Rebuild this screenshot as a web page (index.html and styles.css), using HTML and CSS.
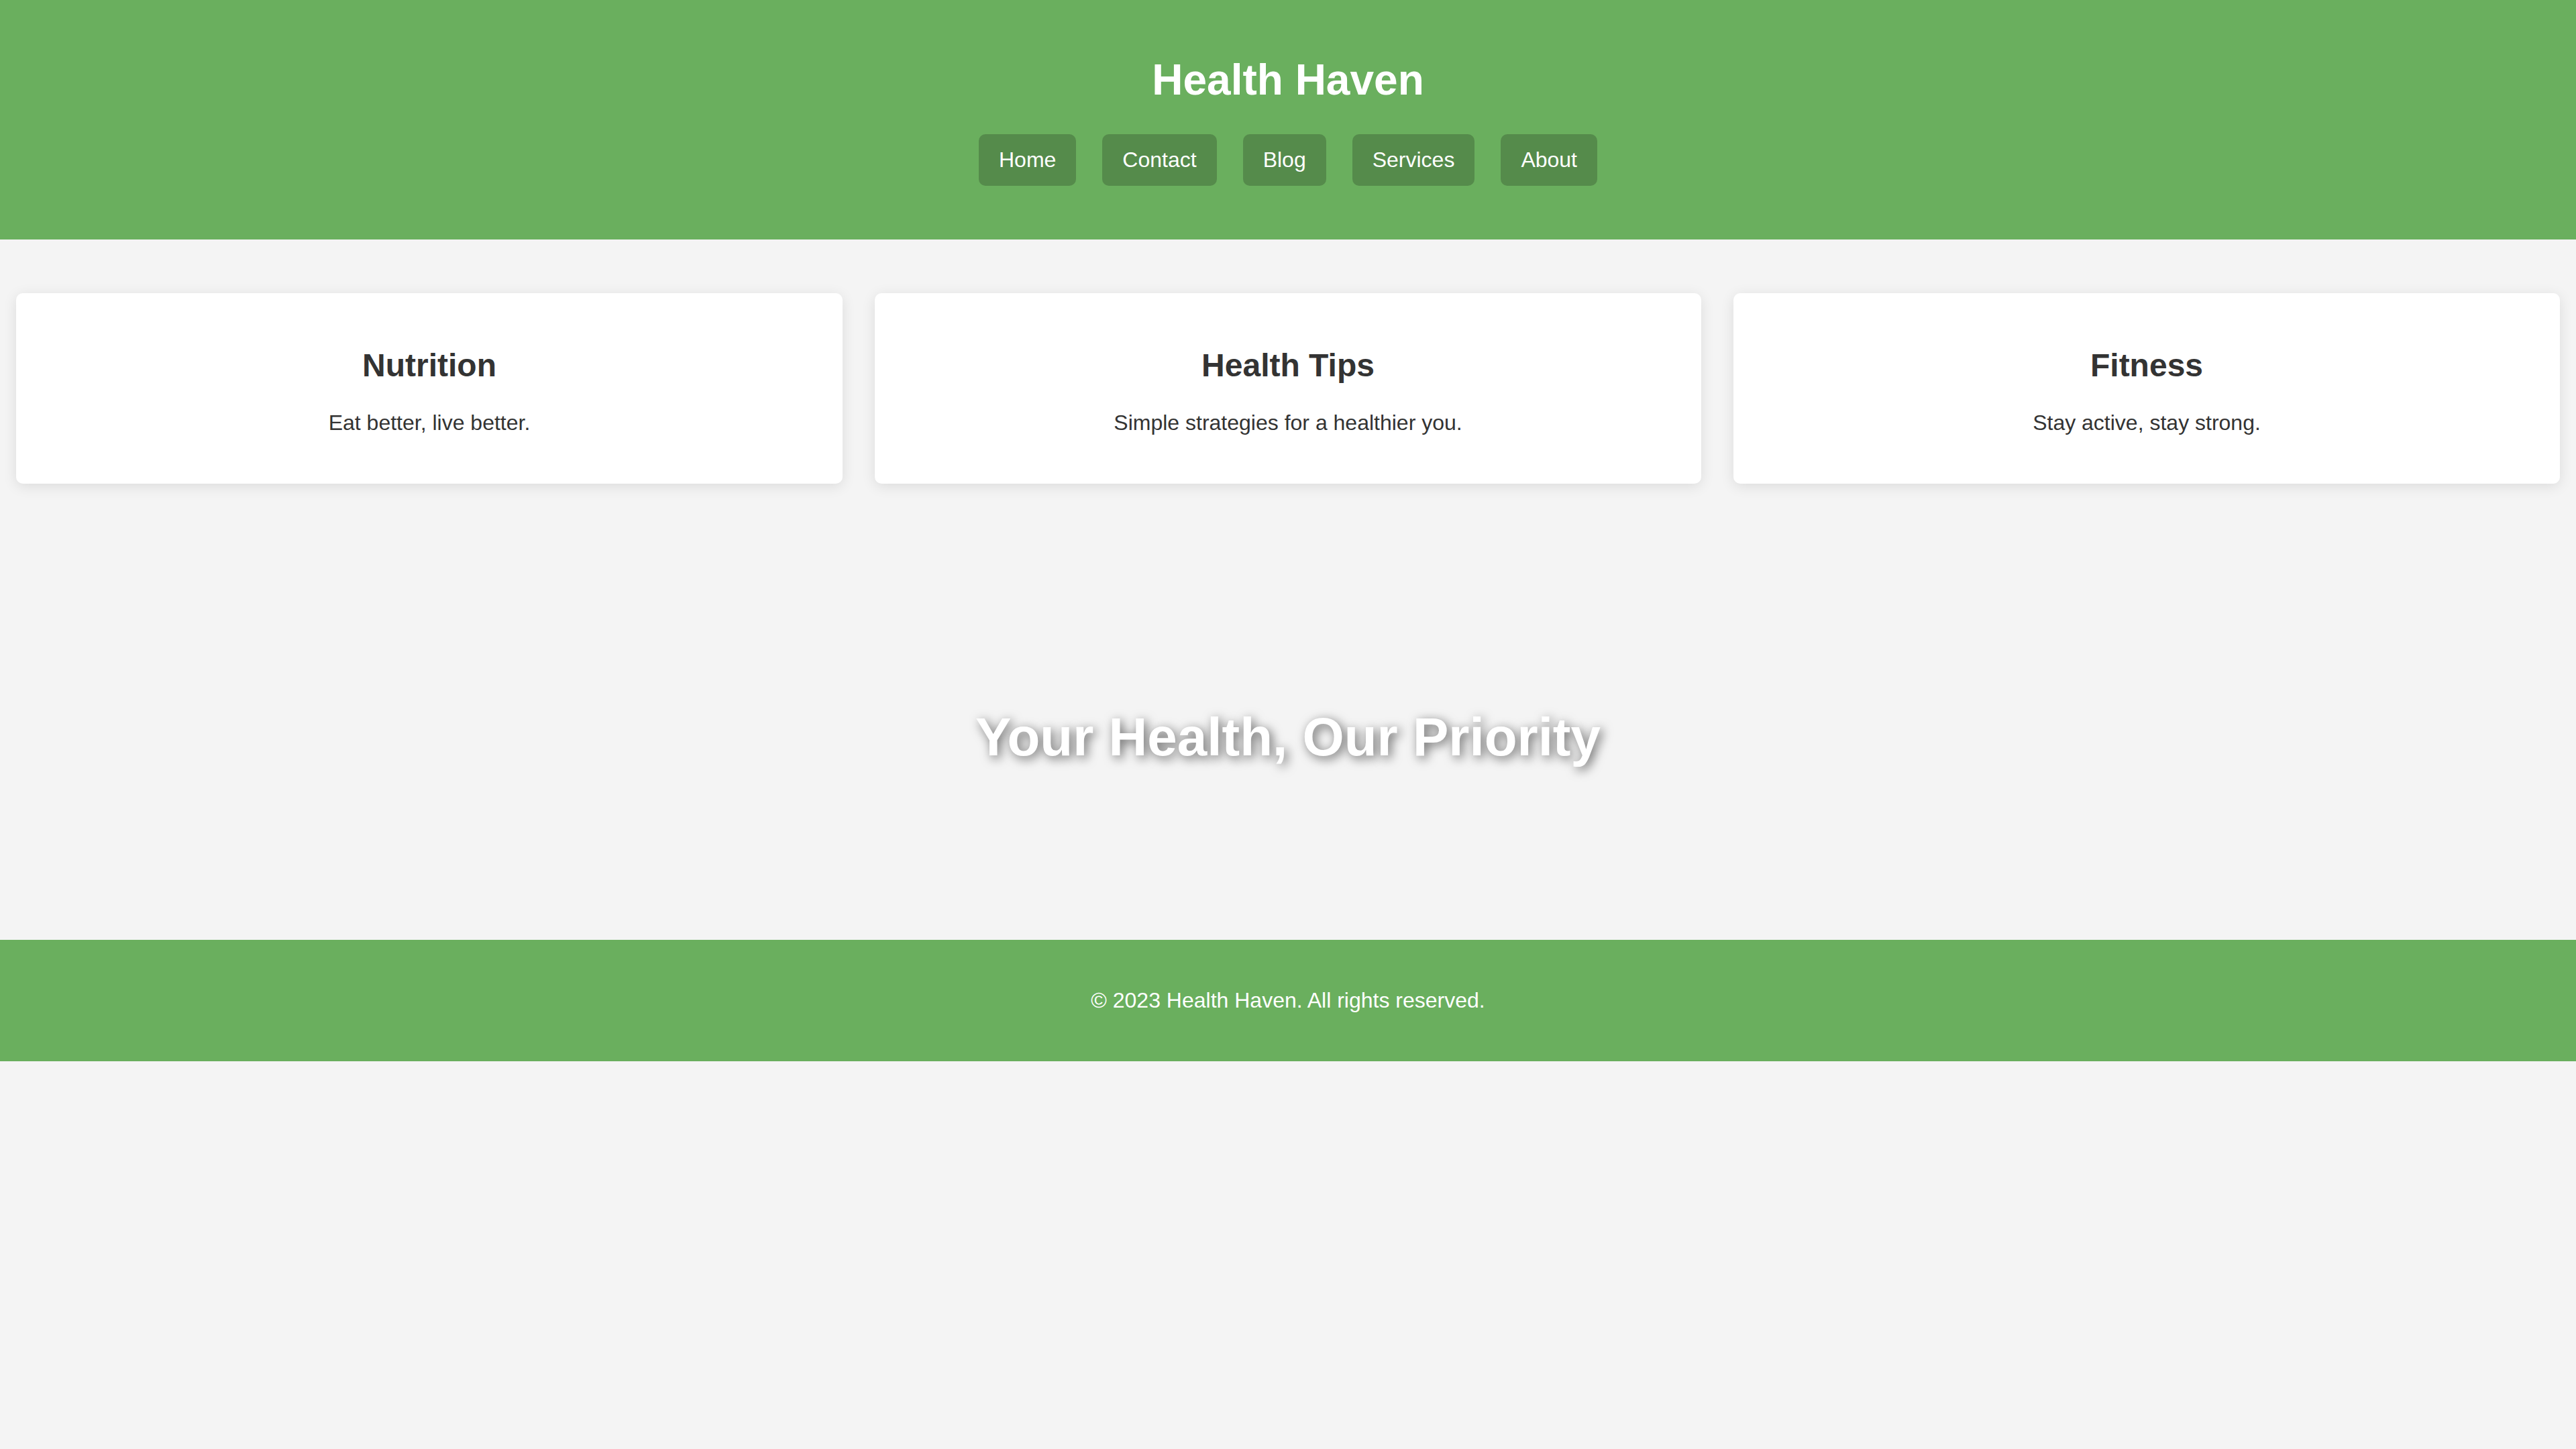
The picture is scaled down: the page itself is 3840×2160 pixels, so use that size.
FILE: index.html
```html
<!DOCTYPE html>
<html lang="en">
<head>
<meta charset="UTF-8">
<title>Health Haven</title>
<link rel="stylesheet" href="styles.css">
</head>
<body>
<header class="site-header">
  <h1 class="site-title">Health Haven</h1>
  <nav class="main-nav">
    <a class="nav-link" href="#">Home</a>
    <a class="nav-link" href="#">Contact</a>
    <a class="nav-link" href="#">Blog</a>
    <a class="nav-link" href="#">Services</a>
    <a class="nav-link" href="#">About</a>
  </nav>
</header>
<main>
  <section class="cards">
    <div class="card">
      <h2 class="card-title">Nutrition</h2>
      <p class="card-text">Eat better, live better.</p>
    </div>
    <div class="card">
      <h2 class="card-title">Health Tips</h2>
      <p class="card-text">Simple strategies for a healthier you.</p>
    </div>
    <div class="card">
      <h2 class="card-title">Fitness</h2>
      <p class="card-text">Stay active, stay strong.</p>
    </div>
  </section>
  <section class="hero">
    <h2 class="hero-title">Your Health, Our Priority</h2>
  </section>
</main>
<footer class="site-footer">
  <p class="footer-text">&copy; 2023 Health Haven. All rights reserved.</p>
</footer>
</body>
</html>
```

FILE: styles.css
```css
html, body {
  margin: 0;
  padding: 0;
}
body {
  background: #f4f4f4;
  color: #333;
  font-family: "Liberation Sans", Arial, sans-serif;
  font-size: 32px;
}
.site-header {
  background: #6aaf5e;
  color: #fff;
  text-align: center;
  padding: 40px 0 80px;
}
.site-title {
  font-size: 64px;
  font-weight: bold;
  margin: 42px 0 44px;
}
.main-nav {
  display: flex;
  justify-content: center;
  gap: 39px;
}
.nav-link {
  display: block;
  background: #558b4b;
  color: #fff;
  text-decoration: none;
  padding: 20px 30px;
  border-radius: 10px;
  font-size: 32px;
}
.cards {
  display: flex;
  justify-content: space-around;
  padding: 80px 0 0;
}
.card {
  width: 1152px;
  padding: 40px;
  background: #fff;
  border-radius: 10px;
  box-shadow: 0 4px 20px rgba(0, 0, 0, 0.1);
  text-align: center;
}
.card-title {
  font-size: 48px;
  margin: 40px 0;
  color: #333;
}
.card-text {
  margin: 32px 0;
  font-size: 32px;
  color: #333;
}
.hero {
  text-align: center;
  padding: 332px 0 256px;
}
.hero-title {
  margin: 0;
  font-size: 80px;
  font-weight: bold;
  color: #fff;
  text-shadow: 4px 4px 16px rgba(0, 0, 0, 0.6);
}
.site-footer {
  background: #6aaf5e;
  color: #fff;
  text-align: center;
  padding: 40px 0;
}
.footer-text {
  margin: 32px 0;
}
```
